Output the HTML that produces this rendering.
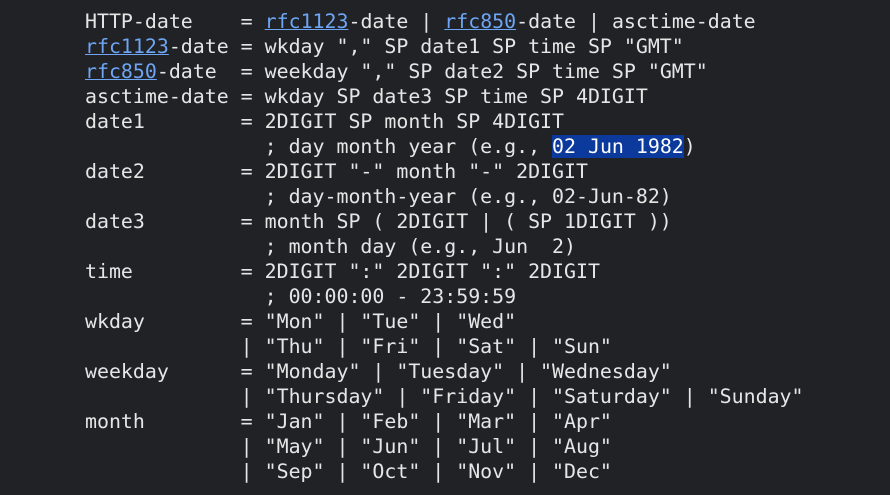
<!DOCTYPE html>
<html><head><meta charset="utf-8"><style>
html,body{margin:0;padding:0;background:#202226;width:890px;height:495px;overflow:hidden}
pre{margin:0;position:absolute;left:85px;top:9px;font-family:"DejaVu Sans Mono","Liberation Mono",monospace;font-size:19.9px;line-height:25px;color:#e6e6e6}
a{color:#6ea6f5;text-decoration:underline}
.sel{background:#0b3a9c;color:#fff}
</style></head><body>
<pre>HTTP-date    = <a>rfc1123</a>-date | <a>rfc850</a>-date | asctime-date
<a>rfc1123</a>-date = wkday "," SP date1 SP time SP "GMT"
<a>rfc850</a>-date  = weekday "," SP date2 SP time SP "GMT"
asctime-date = wkday SP date3 SP time SP 4DIGIT
date1        = 2DIGIT SP month SP 4DIGIT
               ; day month year (e.g., <span class="sel">02 Jun 1982</span>)
date2        = 2DIGIT "-" month "-" 2DIGIT
               ; day-month-year (e.g., 02-Jun-82)
date3        = month SP ( 2DIGIT | ( SP 1DIGIT ))
               ; month day (e.g., Jun  2)
time         = 2DIGIT ":" 2DIGIT ":" 2DIGIT
               ; 00:00:00 - 23:59:59
wkday        = "Mon" | "Tue" | "Wed"
             | "Thu" | "Fri" | "Sat" | "Sun"
weekday      = "Monday" | "Tuesday" | "Wednesday"
             | "Thursday" | "Friday" | "Saturday" | "Sunday"
month        = "Jan" | "Feb" | "Mar" | "Apr"
             | "May" | "Jun" | "Jul" | "Aug"
             | "Sep" | "Oct" | "Nov" | "Dec"</pre>
</body></html>
